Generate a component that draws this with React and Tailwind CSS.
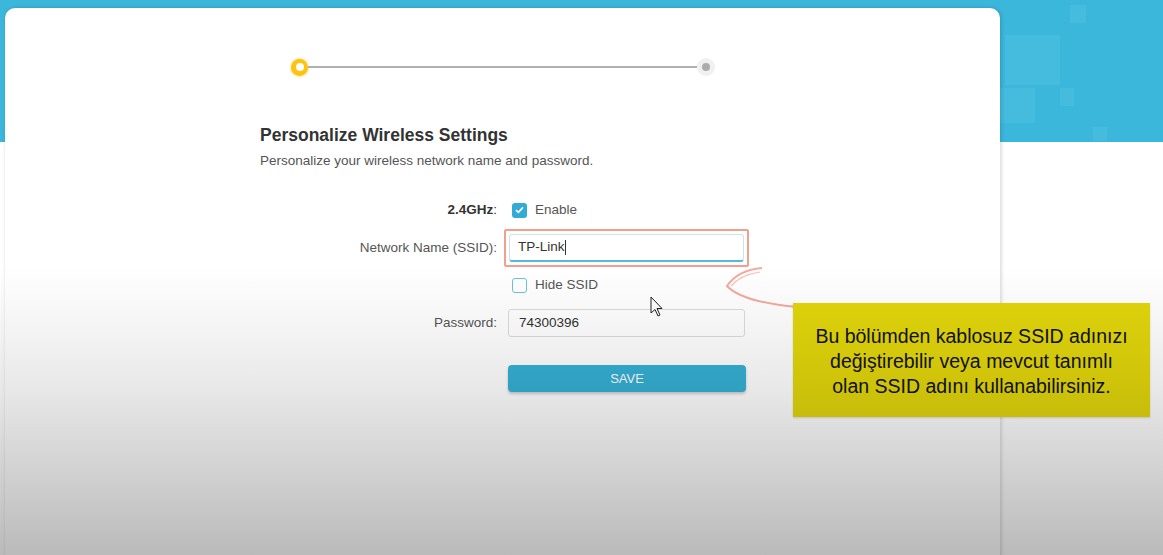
import React from "react";

export default function App() {
  return (
    <div
      className="relative w-[1163px] h-[555px] overflow-hidden bg-white"
      style={{ fontFamily: '"Liberation Sans", Arial, sans-serif' }}
    >
      {/* blue header band */}
      <div className="absolute left-0 top-0 w-full h-[142px] bg-[#3bb7dc]">
        <div className="absolute left-[1005px] top-[35px] w-[55px] h-[50px] bg-white/[0.05]" />
        <div className="absolute left-[1000px] top-[88px] w-[35px] h-[35px] bg-white/[0.05]" />
        <div className="absolute left-[1070px] top-[5px] w-[16px] h-[18px] bg-white/[0.05]" />
        <div className="absolute left-[1060px] top-[88px] w-[14px] h-[18px] bg-white/[0.05]" />
        <div className="absolute left-[1093px] top-[127px] w-[14px] h-[14px] bg-white/[0.05]" />
      </div>

      {/* card */}
      <div className="relative ml-[5px] mt-[8px] w-[995px] h-[600px] bg-white rounded-t-[10px] shadow-[1px_0_4px_rgba(0,0,0,0.18)]">
        {/* stepper */}
        <div className="pt-[50px] pl-[286px] flex items-center h-[68px]">
          <div className="w-[17px] h-[17px] rounded-full bg-[#ffc20e] flex items-center justify-center shadow-[0_0_3px_#ffd24a]">
            <div className="w-[8px] h-[8px] rounded-full bg-white" />
          </div>
          <div className="w-[389px] h-[2px] bg-[#b0b0b0]" />
          <div className="w-[18px] h-[18px] rounded-full bg-[#f0f0f0] flex items-center justify-center">
            <div className="w-[8px] h-[8px] rounded-full bg-[#acacac]" />
          </div>
        </div>

        <div className="pl-[255px]">
          <h1 className="mt-[48px] text-[17.5px] leading-[22px] font-bold text-[#333]">
            Personalize Wireless Settings
          </h1>
          <p className="mt-[7px] text-[13.5px] leading-[16px] text-[#555]">
            Personalize your wireless network name and password.
          </p>

          <div className="mt-[29px] flex flex-col text-[13.5px] text-[#555]">
            <div className="flex items-center h-[24px]">
              <div className="w-[237px] text-right font-bold text-[#333]">
                2.4GHz<span className="font-normal">:</span>
              </div>
              <div className="ml-[15px] flex items-center">
                <div className="w-[15px] h-[15px] rounded-[3px] bg-[#34abd4] flex items-center justify-center">
                  <svg width="9" height="8" viewBox="0 0 9 8">
                    <path d="M1 4.2 L3.4 6.4 L8 1.4" stroke="white" strokeWidth="1.6" fill="none" />
                  </svg>
                </div>
                <span className="ml-[8px]">Enable</span>
              </div>
            </div>

            <div className="flex items-center h-[28px] mt-[12px]">
              <div className="w-[237px] text-right">Network Name (SSID):</div>
              <div className="relative ml-[12px]">
                <div className="absolute -left-[5px] -top-[5px] -right-[5px] -bottom-[5px] border-2 border-[#f2a08e] rounded-[2px]" />
                <div className="w-[235px] h-[28px] rounded-[3px] border border-[#cfe3ea] border-b-2 border-b-[#53bcd9] bg-white flex items-center pl-[8px] text-[#333]">
                  TP-Link<span className="w-[1px] h-[15px] bg-[#333]" />
                </div>
              </div>
            </div>

            <div className="flex items-center h-[24px] mt-[11px]">
              <div className="w-[237px]" />
              <div className="ml-[15px] flex items-center">
                <div className="w-[15px] h-[15px] rounded-[3px] border border-[#6bc3da] bg-white" />
                <span className="ml-[8px]">Hide SSID</span>
              </div>
            </div>

            <div className="flex items-center h-[28px] mt-[12px]">
              <div className="w-[237px] text-right">Password:</div>
              <div className="ml-[11px] w-[237px] h-[28px] rounded-[3px] border border-[#dcdcdc] bg-white flex items-center pl-[10px] text-[#333]">
                74300396
              </div>
            </div>

            <div className="flex items-center mt-[28px]">
              <div className="w-[237px]" />
              <div className="ml-[11px] w-[238px] h-[27px] rounded-[4px] bg-[#35b0d4] shadow-[0_2px_3px_rgba(0,0,0,0.2)] flex items-center justify-center text-white text-[13px]">
                SAVE
              </div>
            </div>
          </div>
        </div>
      </div>

      {/* annotation arrow */}
      <svg className="absolute left-0 top-0 pointer-events-none" width="1163" height="555">
        <path d="M762 268 Q738 270 727 286 Q742 302 797 307" stroke="#f3aa9e" strokeWidth="2" fill="none" />
        <path d="M760 272 Q740 275 731 286" stroke="#f6c0b5" strokeWidth="1.2" fill="none" />
        {/* mouse cursor */}
        <path d="M651 297 L651 313 L655 309.5 L658 316 L660 315 L657 308.5 L662 308.5 Z" fill="white" stroke="#222" strokeWidth="1" strokeLinejoin="round" />
      </svg>

      {/* annotation box */}
      <div className="absolute left-[793px] top-[303px] w-[357px] h-[114px] bg-[#e2d60b] flex flex-col items-center justify-center pt-[2px] text-[19.5px] leading-[25px] text-[#111] shadow-[0_1px_2px_rgba(0,0,0,0.15)]">
        <div>Bu bölümden kablosuz SSID adınızı</div>
        <div>değiştirebilir veya mevcut tanımlı</div>
        <div>olan SSID adını kullanabilirsiniz.</div>
      </div>

      {/* video vignette overlay */}
      <div
        className="absolute inset-0 pointer-events-none"
        style={{
          background:
            "linear-gradient(to bottom, rgba(0,0,0,0) 0%, rgba(0,0,0,0) 48%, rgba(0,0,0,0.04) 58%, rgba(0,0,0,0.09) 70%, rgba(0,0,0,0.18) 85%, rgba(0,0,0,0.27) 100%)",
        }}
      />
    </div>
  );
}
